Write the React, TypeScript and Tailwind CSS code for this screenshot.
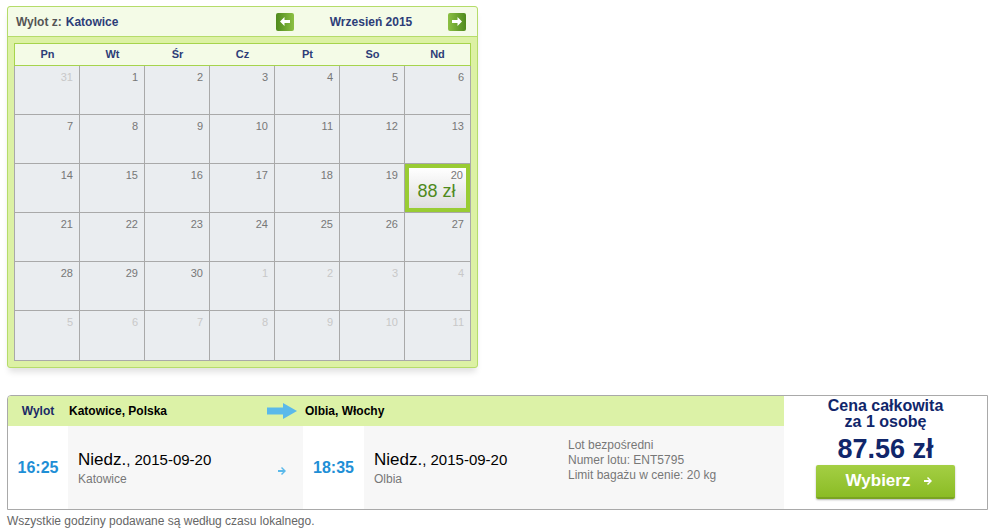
import { ReactNode } from "react";

const font = { fontFamily: '"Liberation Sans", Arial, sans-serif' };

type Day = { n: number; muted?: boolean; price?: string };

const weeks: Day[][] = [
  [{ n: 31, muted: true }, { n: 1 }, { n: 2 }, { n: 3 }, { n: 4 }, { n: 5 }, { n: 6 }],
  [{ n: 7 }, { n: 8 }, { n: 9 }, { n: 10 }, { n: 11 }, { n: 12 }, { n: 13 }],
  [{ n: 14 }, { n: 15 }, { n: 16 }, { n: 17 }, { n: 18 }, { n: 19 }, { n: 20, price: "88 zł" }],
  [{ n: 21 }, { n: 22 }, { n: 23 }, { n: 24 }, { n: 25 }, { n: 26 }, { n: 27 }],
  [{ n: 28 }, { n: 29 }, { n: 30 }, { n: 1, muted: true }, { n: 2, muted: true }, { n: 3, muted: true }, { n: 4, muted: true }],
  [{ n: 5, muted: true }, { n: 6, muted: true }, { n: 7, muted: true }, { n: 8, muted: true }, { n: 9, muted: true }, { n: 10, muted: true }, { n: 11, muted: true }],
];

const dayNames = ["Pn", "Wt", "Śr", "Cz", "Pt", "So", "Nd"];

const NavButton = ({ dir }: { dir: "left" | "right" }) => (
  <button
    type="button"
    className={`flex h-[18px] w-[18px] items-center justify-center rounded-[2px] ${
      dir === "left"
        ? "bg-gradient-to-r from-[#4f8a1c] to-[#8cc043]"
        : "bg-gradient-to-r from-[#8cc043] to-[#4f8a1c]"
    }`}
  >
    <svg width="10" height="9" viewBox="0 0 10 9">
      <path
        d={dir === "left" ? "M0 4.5 L4.5 0 V3 H10 V6 H4.5 V9 Z" : "M10 4.5 L5.5 0 V3 H0 V6 H5.5 V9 Z"}
        fill="#fff"
      />
    </svg>
  </button>
);

const Cell = ({ day, last, lastRow }: { day: Day; last: boolean; lastRow: boolean }) => {
  const edges = `${last ? "" : "border-r"} ${lastRow ? "" : "border-b"} border-[#a9a9a9]`;
  if (day.price) {
    return (
      <div className={`h-[49px] ${edges} bg-[#eaedf0]`}>
        <div className="h-full border-[4px] border-[#99cc33] bg-gradient-to-b from-white to-[#dedede] px-[3px] pt-[1px] text-right">
          <div className="text-[11px] leading-[13px] text-[#777]">{day.n}</div>
          <div className="pr-[2px] text-center text-[18px] leading-[18px] text-[#4f8a1c]">{day.price}</div>
        </div>
      </div>
    );
  }
  return (
    <div className={`h-[49px] ${edges} bg-[#eaedf0] pr-[6px] pt-[5px] text-right text-[11px] leading-[13px] ${day.muted ? "text-[#c8c8c8]" : "text-[#777]"}`}>
      {day.n}
    </div>
  );
};

const Calendar = () => (
  <div className="ml-[7px] mt-[6px] w-[471px] rounded-[3px] border border-[#b5dc6a] bg-[#dcf1a4] shadow-[0_6px_6px_-2px_rgba(0,0,0,0.12)]">
    <div className="flex h-[30px] items-center rounded-t-[3px] border-b border-[#b5dc6a] bg-[#f4fbe7] pl-[8px] pr-[11px] text-[12px] font-bold">
      <span className="text-[#555]">Wylot z:</span>
      <span className="ml-[4px] text-[#2d3d78]">Katowice</span>
      <div className="ml-auto flex w-[190px] items-center">
        <NavButton dir="left" />
        <span className="flex-1 text-center text-[#2d3d78]">Wrzesień 2015</span>
        <NavButton dir="right" />
      </div>
    </div>
    <div className="px-[6px] pb-[6px] pt-[6px]">
      <div className="grid h-[23px] grid-cols-7 items-center border border-[#a6d44c] bg-[#f4fbe7] text-center text-[11px] font-bold text-[#2d3d78]">
        {dayNames.map((d) => (
          <span key={d}>{d}</span>
        ))}
      </div>
      <div className="grid grid-cols-7 border-x border-b border-[#a9a9a9]">
        {weeks.map((week, wi) =>
          week.map((day, di) => (
            <Cell key={`${wi}-${di}`} day={day} last={di === 6} lastRow={wi === 5} />
          ))
        )}
      </div>
    </div>
  </div>
);

const Col = ({ className, children }: { className: string; children?: ReactNode }) => (
  <div className={className}>{children}</div>
);

const SmallArrow = ({ color }: { color: string }) => (
  <svg width="9" height="8" viewBox="0 0 9 8">
    <path d="M0 3 H5 L3 1 L4 0 L8 4 L4 8 L3 7 L5 5 H0 Z" fill={color} />
  </svg>
);

const Flight = () => (
  <div className="ml-[7px] mt-[27px] flex w-[981px] overflow-hidden rounded-tl-[4px] border border-[#a9a9a9] bg-white">
    <div className="flex-1">
      <div className="flex h-[30px] items-center bg-[#dcf2a7] text-[12px] font-bold">
        <Col className="w-[60px] text-center text-[#1b2a66]">Wylot</Col>
        <Col className="w-[199px] pl-[1px] text-black">Katowice, Polska</Col>
        <Col className="w-[36px]">
          <svg width="30" height="16" viewBox="0 0 30 16">
            <path d="M0 4.5 H16 V0 L30 8 L16 16 V11.5 H0 Z" fill="#5ab9ea" />
          </svg>
        </Col>
        <Col className="pl-[2px] text-black">Olbia, Włochy</Col>
      </div>
      <div className="flex h-[83px]">
        <Col className="flex w-[60px] items-center justify-center bg-white text-[16px] font-bold text-[#1f8fd6]">
          16:25
        </Col>
        <Col className="flex w-[235px] items-center bg-[#f7f7f7] pl-[10px]">
          <div className="-mt-[2px] flex-1">
            <div className="text-black">
              <span className="text-[17px]">Niedz.</span>
              <span className="text-[15px]">, 2015-09-20</span>
            </div>
            <div className="text-[12px] leading-[13px] text-[#777]">Katowice</div>
          </div>
          <div className="mr-[16px] mt-[6px]">
            <SmallArrow color="#5ab9ea" />
          </div>
        </Col>
        <Col className="flex w-[61px] items-center justify-center bg-white text-[16px] font-bold text-[#1f8fd6]">
          18:35
        </Col>
        <Col className="flex flex-1 items-center bg-[#f7f7f7] pl-[10px]">
          <div className="-mt-[2px] w-[194px]">
            <div className="text-black">
              <span className="text-[17px]">Niedz.</span>
              <span className="text-[15px]">, 2015-09-20</span>
            </div>
            <div className="text-[12px] leading-[13px] text-[#777]">Olbia</div>
          </div>
          <div className="-mt-[14px] text-[12px] leading-[15px] text-[#777]">
            <div>Lot bezpośredni</div>
            <div>Numer lotu: ENT5795</div>
            <div>Limit bagażu w cenie: 20 kg</div>
          </div>
        </Col>
      </div>
    </div>
    <div className="flex w-[203px] flex-col items-center bg-white pt-[2px] text-[#10266a]">
      <div className="text-center text-[16px] font-bold leading-[16px]">
        Cena całkowita
        <br />
        za 1 osobę
      </div>
      <div className="mt-[4px] text-[27px] font-bold leading-[30px]">87.56 zł</div>
      <button
        type="button"
        className="mt-[1px] flex h-[34px] w-[139px] items-center justify-center gap-[14px] rounded-[2px] border-b-2 border-[#7aa322] bg-gradient-to-b from-[#a4cf43] to-[#8bbc24] pl-[8px] text-[17px] font-bold text-white shadow-[0_1px_2px_rgba(0,0,0,0.3)]"
      >
        Wybierz
        <SmallArrow color="#fff" />
      </button>
    </div>
  </div>
);

export default function App() {
  return (
    <div className="h-[528px] w-[1000px] overflow-hidden bg-white" style={font}>
      <Calendar />
      <Flight />
      <p className="ml-[7px] mt-[4px] text-[12px] leading-[14px] text-[#666]">
        Wszystkie godziny podawane są według czasu lokalnego.
      </p>
    </div>
  );
}
